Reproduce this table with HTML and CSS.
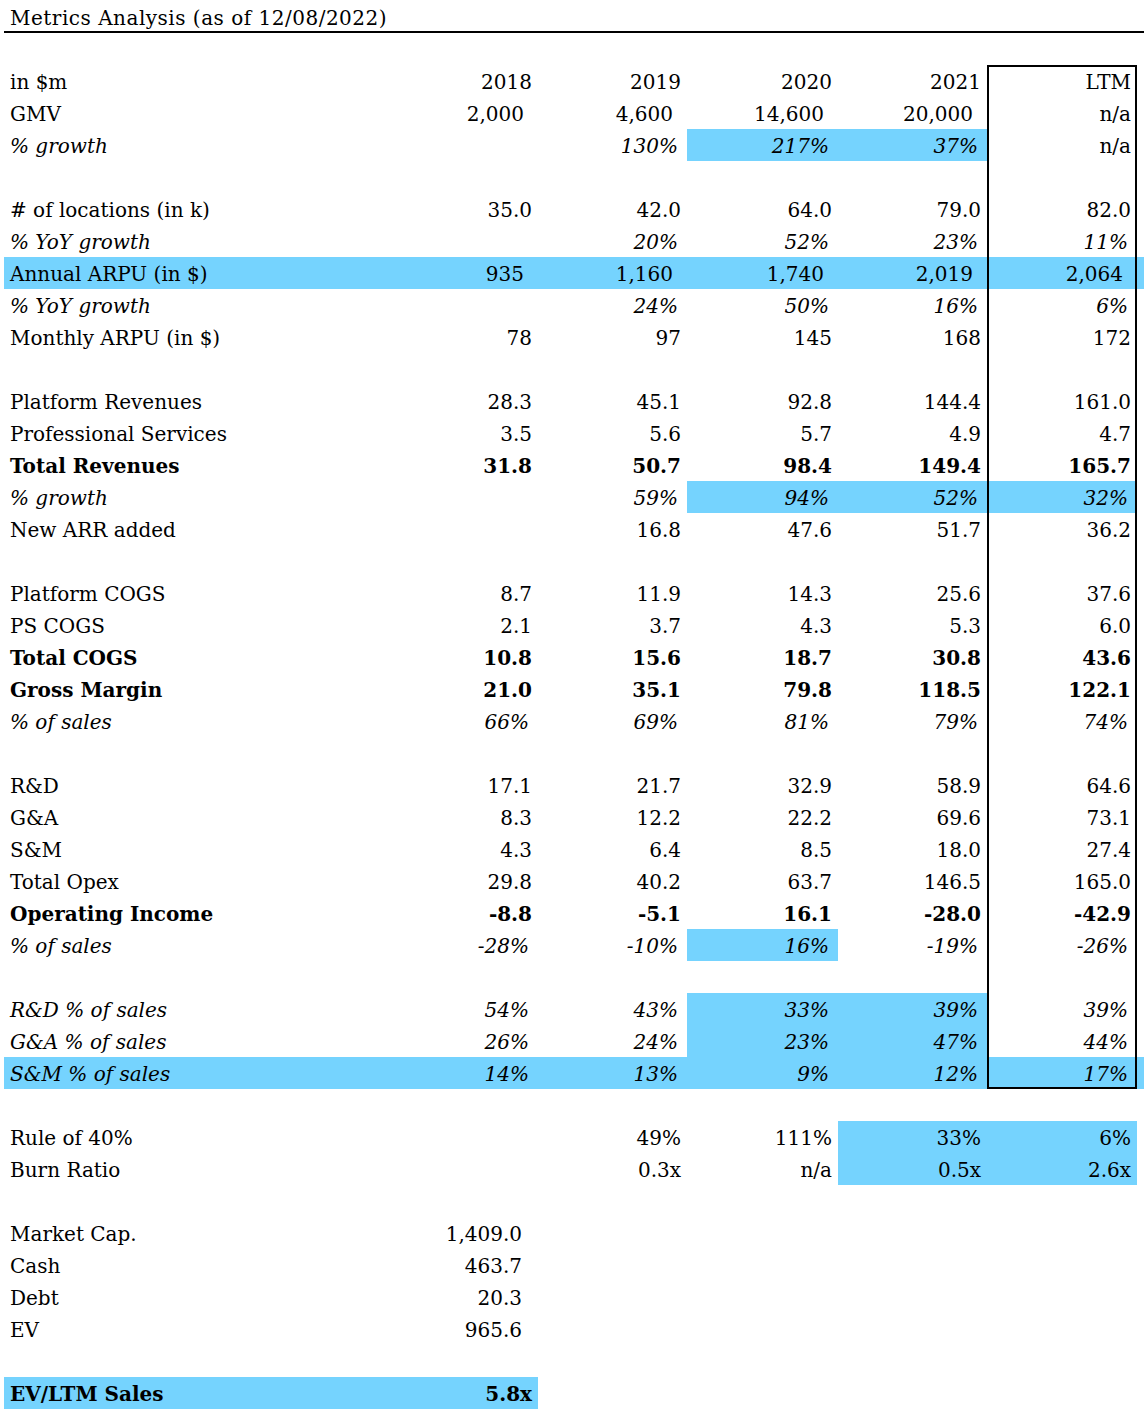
FILE: index.html
```html
<!DOCTYPE html>
<html>
<head>
<meta charset="utf-8">
<link rel="stylesheet" href="styles.css">
</head>
<body>
<div class="sheet">
  <div class="title">Metrics Analysis (as of 12/08/2022)</div>
  <div class="row"><div></div></div>
  <div class="row"><div class="l">in $m</div><div class="c">2018</div><div class="c">2019</div><div class="c">2020</div><div class="c">2021</div><div class="c bx bt">LTM</div></div>
  <div class="row"><div class="l">GMV</div><div class="c a">2,000</div><div class="c a">4,600</div><div class="c a">14,600</div><div class="c a">20,000</div><div class="c bx">n/a</div></div>
  <div class="row i"><div class="l">% growth</div><div class="c"></div><div class="c p">130%</div><div class="c p hl">217%</div><div class="c p hl">37%</div><div class="c bx up">n/a</div></div>
  <div class="row"><div class="l"></div><div></div><div></div><div></div><div></div><div class="bx"></div></div>
  <div class="row"><div class="l"># of locations (in k)</div><div class="c">35.0</div><div class="c">42.0</div><div class="c">64.0</div><div class="c">79.0</div><div class="c bx">82.0</div></div>
  <div class="row i"><div class="l">% YoY growth</div><div class="c"></div><div class="c p">20%</div><div class="c p">52%</div><div class="c p">23%</div><div class="c p bx">11%</div></div>
  <div class="row hlrow"><div class="l">Annual ARPU (in $)</div><div class="c a">935</div><div class="c a">1,160</div><div class="c a">1,740</div><div class="c a">2,019</div><div class="c a bx">2,064</div></div>
  <div class="row i"><div class="l">% YoY growth</div><div class="c"></div><div class="c p">24%</div><div class="c p">50%</div><div class="c p">16%</div><div class="c p bx">6%</div></div>
  <div class="row"><div class="l">Monthly ARPU (in $)</div><div class="c">78</div><div class="c">97</div><div class="c">145</div><div class="c">168</div><div class="c bx">172</div></div>
  <div class="row"><div class="l"></div><div></div><div></div><div></div><div></div><div class="bx"></div></div>
  <div class="row"><div class="l">Platform Revenues</div><div class="c">28.3</div><div class="c">45.1</div><div class="c">92.8</div><div class="c">144.4</div><div class="c bx">161.0</div></div>
  <div class="row"><div class="l">Professional Services</div><div class="c">3.5</div><div class="c">5.6</div><div class="c">5.7</div><div class="c">4.9</div><div class="c bx">4.7</div></div>
  <div class="row b"><div class="l">Total Revenues</div><div class="c">31.8</div><div class="c">50.7</div><div class="c">98.4</div><div class="c">149.4</div><div class="c bx">165.7</div></div>
  <div class="row i"><div class="l">% growth</div><div class="c"></div><div class="c p">59%</div><div class="c p hl">94%</div><div class="c p hl">52%</div><div class="c p hl bx">32%</div></div>
  <div class="row"><div class="l">New ARR added</div><div class="c"></div><div class="c">16.8</div><div class="c">47.6</div><div class="c">51.7</div><div class="c bx">36.2</div></div>
  <div class="row"><div class="l"></div><div></div><div></div><div></div><div></div><div class="bx"></div></div>
  <div class="row"><div class="l">Platform COGS</div><div class="c">8.7</div><div class="c">11.9</div><div class="c">14.3</div><div class="c">25.6</div><div class="c bx">37.6</div></div>
  <div class="row"><div class="l">PS COGS</div><div class="c">2.1</div><div class="c">3.7</div><div class="c">4.3</div><div class="c">5.3</div><div class="c bx">6.0</div></div>
  <div class="row b"><div class="l">Total COGS</div><div class="c">10.8</div><div class="c">15.6</div><div class="c">18.7</div><div class="c">30.8</div><div class="c bx">43.6</div></div>
  <div class="row b"><div class="l">Gross Margin</div><div class="c">21.0</div><div class="c">35.1</div><div class="c">79.8</div><div class="c">118.5</div><div class="c bx">122.1</div></div>
  <div class="row i"><div class="l">% of sales</div><div class="c p">66%</div><div class="c p">69%</div><div class="c p">81%</div><div class="c p">79%</div><div class="c p bx">74%</div></div>
  <div class="row"><div class="l"></div><div></div><div></div><div></div><div></div><div class="bx"></div></div>
  <div class="row"><div class="l">R&amp;D</div><div class="c">17.1</div><div class="c">21.7</div><div class="c">32.9</div><div class="c">58.9</div><div class="c bx">64.6</div></div>
  <div class="row"><div class="l">G&amp;A</div><div class="c">8.3</div><div class="c">12.2</div><div class="c">22.2</div><div class="c">69.6</div><div class="c bx">73.1</div></div>
  <div class="row"><div class="l">S&amp;M</div><div class="c">4.3</div><div class="c">6.4</div><div class="c">8.5</div><div class="c">18.0</div><div class="c bx">27.4</div></div>
  <div class="row"><div class="l">Total Opex</div><div class="c">29.8</div><div class="c">40.2</div><div class="c">63.7</div><div class="c">146.5</div><div class="c bx">165.0</div></div>
  <div class="row b"><div class="l">Operating Income</div><div class="c">-8.8</div><div class="c">-5.1</div><div class="c">16.1</div><div class="c">-28.0</div><div class="c bx">-42.9</div></div>
  <div class="row i"><div class="l">% of sales</div><div class="c p">-28%</div><div class="c p">-10%</div><div class="c p hl">16%</div><div class="c p">-19%</div><div class="c p bx">-26%</div></div>
  <div class="row"><div class="l"></div><div></div><div></div><div></div><div></div><div class="bx"></div></div>
  <div class="row i"><div class="l">R&amp;D % of sales</div><div class="c p">54%</div><div class="c p">43%</div><div class="c p hl">33%</div><div class="c p hl">39%</div><div class="c p bx">39%</div></div>
  <div class="row i"><div class="l">G&amp;A % of sales</div><div class="c p">26%</div><div class="c p">24%</div><div class="c p hl">23%</div><div class="c p hl">47%</div><div class="c p bx">44%</div></div>
  <div class="row i hlrow"><div class="l">S&amp;M % of sales</div><div class="c p">14%</div><div class="c p">13%</div><div class="c p">9%</div><div class="c p">12%</div><div class="c p bx bb">17%</div></div>
  <div class="row"><div></div></div>
  <div class="row"><div class="l">Rule of 40%</div><div class="c"></div><div class="c">49%</div><div class="c">111%</div><div class="c hl">33%</div><div class="c hl">6%</div></div>
  <div class="row"><div class="l">Burn Ratio</div><div class="c"></div><div class="c">0.3x</div><div class="c">n/a</div><div class="c hl">0.5x</div><div class="c hl">2.6x</div></div>
  <div class="row"><div></div></div>
  <div class="row"><div class="l">Market Cap.</div><div class="c m">1,409.0</div></div>
  <div class="row"><div class="l">Cash</div><div class="c m">463.7</div></div>
  <div class="row"><div class="l">Debt</div><div class="c m">20.3</div></div>
  <div class="row"><div class="l">EV</div><div class="c m">965.6</div></div>
  <div class="row"><div></div></div>
  <div class="row b"><div class="l hl">EV/LTM Sales</div><div class="c hl">5.8x</div></div>
</div>
</body>
</html>
```

FILE: styles.css
```css
html, body {
  margin: 0;
  padding: 0;
  background: #fff;
}
.sheet {
  padding: 1px 0 0 4px;
  font-family: "DejaVu Serif", "Liberation Serif", serif;
  font-size: 20px;
  color: #000;
}
.title {
  box-sizing: border-box;
  width: 1140px;
  height: 32px;
  line-height: 35px;
  padding-left: 6px;
  letter-spacing: 0.5px;
  border-bottom: 2px solid #000;
}
.row {
  display: grid;
  grid-template-columns: 384px 150px 149px 151px 149px 150px;
  grid-template-rows: 32px;
  height: 32px;
  line-height: 35px;
}
.l {
  padding-left: 6px;
  white-space: nowrap;
}
.c {
  text-align: right;
  padding-right: 6px;
  white-space: nowrap;
}
.c.a { padding-right: 14px; }
.c.p { padding-right: 9px; }
.c.m { padding-right: 16px; }
.i { font-style: italic; }
.up { font-style: normal; }
.b { font-weight: bold; }
.hl, .hlrow { background: #75d3fe; }
.bx { box-shadow: inset 2px 0 0 #000, inset -2px 0 0 #000; }
.bx.bt { box-shadow: inset 2px 0 0 #000, inset -2px 0 0 #000, inset 0 2px 0 #000; }
.bx.bb { box-shadow: inset 2px 0 0 #000, inset -2px 0 0 #000, inset 0 -2px 0 #000; }
```
